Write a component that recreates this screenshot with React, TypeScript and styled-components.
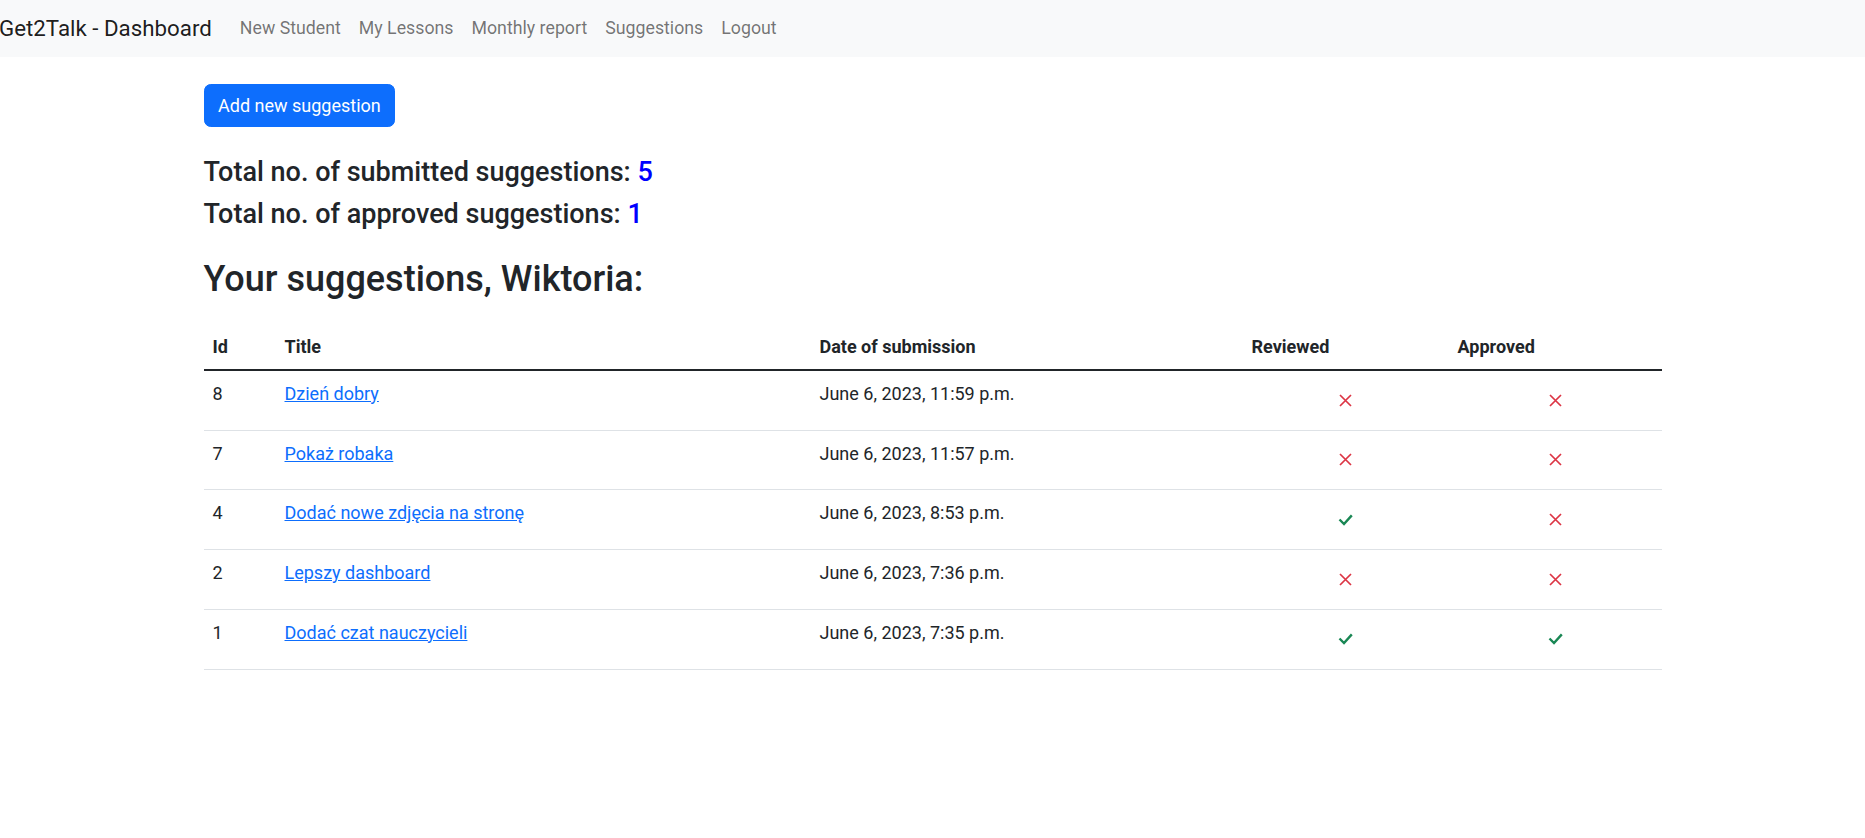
import React from "react";
import styled, { createGlobalStyle } from "styled-components";

const GlobalStyle = createGlobalStyle`
  *, *::before, *::after {
    box-sizing: border-box;
  }
  body {
    margin: 0;
    font-family: Roboto, "Noto Sans", "Liberation Sans", sans-serif;
    font-size: 18px;
    line-height: 1.5;
    color: #212529;
    background: #fff;
  }
`;

const Navbar = styled.nav`
  height: 57px;
  background-color: #f8f9fa;
  display: flex;
  align-items: center;
`;

const Brand = styled.a`
  font-size: 22.3px;
  color: rgba(0, 0, 0, 0.9);
  text-decoration: none;
  margin-left: -1px;
  margin-right: 19px;
  white-space: nowrap;
`;

const NavList = styled.ul`
  display: flex;
  list-style: none;
  margin: 0;
  padding: 0;
`;

const NavLink = styled.a`
  display: block;
  padding: 0 9px;
  font-size: 17.75px;
  color: rgba(0, 0, 0, 0.55);
  text-decoration: none;
`;

const Container = styled.main`
  max-width: 1458px;
  margin: 0 auto;
`;

const Button = styled.button`
  margin-top: 27px;
  height: 42.75px;
  padding: 0 13.5px;
  font-family: inherit;
  font-size: 18px;
  color: #fff;
  background-color: #0d6efd;
  border: 1px solid #0d6efd;
  border-radius: 6.75px;
  cursor: pointer;
`;

const Stat = styled.h4<{ $first?: boolean }>`
  font-size: 27px;
  font-weight: 500;
  line-height: 32.4px;
  margin: ${({ $first }) => ($first ? "29px" : "10px")} 0 0;
`;

const Count = styled.span`
  color: blue;
`;

const Heading = styled.h2`
  font-size: 36px;
  font-weight: 500;
  line-height: 43.2px;
  margin: 27px 0 0;
`;

const Table = styled.table`
  width: 100%;
  margin-top: 23px;
  border-collapse: collapse;
  table-layout: fixed;
`;

const HeadCell = styled.th`
  text-align: left;
  font-weight: 700;
  padding: 9px;
  vertical-align: top;
  border-bottom: 2px solid #212529;
`;

const Row = styled.tr`
  border-bottom: 1px solid #dee2e6;
`;

const Cell = styled.td`
  padding: 9px;
  vertical-align: top;
`;

const IconCell = styled(Cell)`
  text-align: center;
`;

const IconBox = styled.span`
  height: 40.75px;
  display: flex;
  align-items: center;
  justify-content: center;
`;

const TitleLink = styled.a`
  color: #0d6efd;
  text-decoration: underline;
`;

const Cross = () => (
  <svg width="13" height="13" viewBox="0 0 13 13" fill="none" stroke="#dc3545" strokeWidth="1.7">
    <path d="M1 1l11 11M12 1L1 12" />
  </svg>
);

const Check = () => (
  <svg width="15" height="12" viewBox="0 0 15 12" fill="none" stroke="#198754" strokeWidth="2.4">
    <path d="M1.5 5.5l4.5 4.5 7.8-8.6" />
  </svg>
);

const suggestions = [
  { id: 8, title: "Dzień dobry", date: "June 6, 2023, 11:59 p.m.", reviewed: false, approved: false },
  { id: 7, title: "Pokaż robaka", date: "June 6, 2023, 11:57 p.m.", reviewed: false, approved: false },
  { id: 4, title: "Dodać nowe zdjęcia na stronę", date: "June 6, 2023, 8:53 p.m.", reviewed: true, approved: false },
  { id: 2, title: "Lepszy dashboard", date: "June 6, 2023, 7:36 p.m.", reviewed: false, approved: false },
  { id: 1, title: "Dodać czat nauczycieli", date: "June 6, 2023, 7:35 p.m.", reviewed: true, approved: true },
];

const links = ["New Student", "My Lessons", "Monthly report", "Suggestions", "Logout"];

const App = () => {
  const approved = suggestions.filter((s) => s.approved).length;
  return (
    <>
      <GlobalStyle />
      <Navbar>
        <Brand href="#">Get2Talk - Dashboard</Brand>
        <NavList>
          {links.map((l) => (
            <li key={l}>
              <NavLink href="#">{l}</NavLink>
            </li>
          ))}
        </NavList>
      </Navbar>
      <Container>
        <Button>Add new suggestion</Button>
        <Stat $first>
          Total no. of submitted suggestions: <Count>{suggestions.length}</Count>
        </Stat>
        <Stat>
          Total no. of approved suggestions: <Count>{approved}</Count>
        </Stat>
        <Heading>Your suggestions, Wiktoria:</Heading>
        <Table>
          <colgroup>
            <col style={{ width: 72 }} />
            <col style={{ width: 535 }} />
            <col style={{ width: 432 }} />
            <col style={{ width: 206 }} />
            <col />
          </colgroup>
          <thead>
            <tr>
              <HeadCell>Id</HeadCell>
              <HeadCell>Title</HeadCell>
              <HeadCell>Date of submission</HeadCell>
              <HeadCell>Reviewed</HeadCell>
              <HeadCell>Approved</HeadCell>
            </tr>
          </thead>
          <tbody>
            {suggestions.map((s) => (
              <Row key={s.id}>
                <Cell>{s.id}</Cell>
                <Cell>
                  <TitleLink href="#">{s.title}</TitleLink>
                </Cell>
                <Cell>{s.date}</Cell>
                <IconCell>
                  <IconBox>{s.reviewed ? <Check /> : <Cross />}</IconBox>
                </IconCell>
                <IconCell>
                  <IconBox>{s.approved ? <Check /> : <Cross />}</IconBox>
                </IconCell>
              </Row>
            ))}
          </tbody>
        </Table>
      </Container>
    </>
  );
};

export default App;
